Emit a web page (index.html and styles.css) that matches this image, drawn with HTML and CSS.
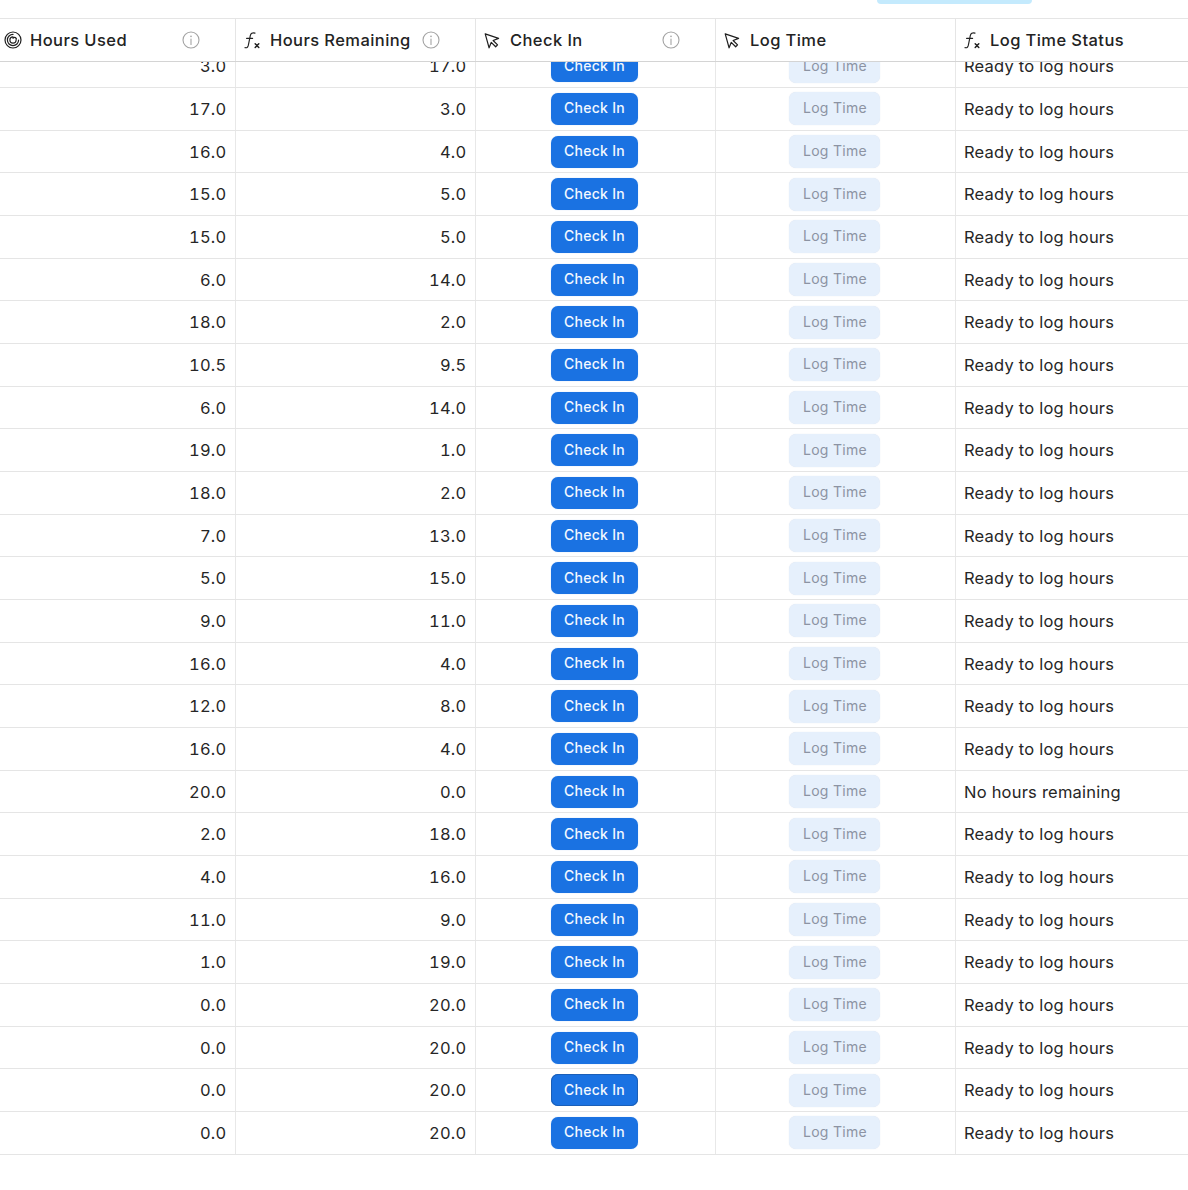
FILE: index.html
```html
<!DOCTYPE html>
<html lang="en">
<head>
<meta charset="utf-8">
<title>Hours table</title>
<link rel="stylesheet" href="styles.css">
</head>
<body>
<svg class="defs" width="0" height="0" aria-hidden="true">
  <symbol id="i-info" viewBox="0 0 18 18"><circle cx="9" cy="9" r="8" fill="none" stroke="#a3a3a3" stroke-width="1.1"/><circle cx="9" cy="5.4" r="0.8" fill="#a3a3a3"/><path d="M9 8v5.4" fill="none" stroke="#a3a3a3" stroke-width="1.1" stroke-linecap="round"/></symbol>
  <symbol id="i-fx" viewBox="0 0 16 17"><path d="M1 15.600c1.800.5 2.800-.2 3.300-2.200l2-9.700C6.800 1.400 8.200.4 11 1.100M2.600 6.400h6" fill="none" stroke="#222" stroke-width="1.150" stroke-linecap="round"/><path d="M11.200 11.800l3.600 3.700M14.800 11.800l-3.600 3.700" fill="none" stroke="#222" stroke-width="1.500" stroke-linecap="round"/></symbol>
  <symbol id="i-cursor" viewBox="0 0 17 17"><path d="M1.300 1.400l14.200 4.800-5.800 2.300 4.700 4.700-2 2-4.700-4.700-2.300 5.800z" fill="none" stroke="#1f1f1f" stroke-width="1.300" stroke-linejoin="round"/></symbol>
  <symbol id="i-rollup" viewBox="0 0 18 18"><circle cx="9" cy="9" r="8" fill="none" stroke="#1f1f1f" stroke-width="1.200"/><path d="M9 3.400a5.600 5.600 0 1 0 5.600 5.600M9 5.900a3.100 3.100 0 1 0 3.100 3.100A1.700 1.700 0 0 0 9 7.300" fill="none" stroke="#1f1f1f" stroke-width="1.200" stroke-linecap="round"/></symbol>
</svg>
<div class="topbar"><span class="topbar-tab"></span></div>
<main class="table">
  <header class="row head">
    <div class="hcell"><svg class="ic ic-roll"><use href="#i-rollup"/></svg><span class="hlabel">Hours Used</span><svg class="info"><use href="#i-info"/></svg></div>
    <div class="hcell"><svg class="ic"><use href="#i-fx"/></svg><span class="hlabel">Hours Remaining</span><svg class="info"><use href="#i-info"/></svg></div>
    <div class="hcell"><svg class="ic"><use href="#i-cursor"/></svg><span class="hlabel">Check In</span><svg class="info"><use href="#i-info"/></svg></div>
    <div class="hcell"><svg class="ic"><use href="#i-cursor"/></svg><span class="hlabel">Log Time</span></div>
    <div class="hcell"><svg class="ic"><use href="#i-fx"/></svg><span class="hlabel">Log Time Status</span></div>
  </header>
  <div class="viewport">
    <div class="rows" id="rows"></div>
  </div>
</main>
<script src="app.js"></script>
</body>
</html>
```
FILE: styles.css
```css
* { box-sizing: border-box; }
html, body { margin: 0; background: #fff; }
body {
  width: 1188px;
  height: 1190px;
  overflow: hidden;
  font-family: Inter, "Liberation Sans", sans-serif;
  color: #1f1f1f;
  font-size: 16.5px;
}
.defs { display: block; height: 0; }
.topbar { height: 18px; padding-left: 877px; }
.topbar-tab {
  display: block;
  width: 155px;
  height: 4px;
  background: #c4eafd;
  border-radius: 0 0 4px 4px;
}
.table { width: 1188px; }
.row {
  display: grid;
  grid-template-columns: 236px 240px 240px 240px 232px;
}
.head {
  height: 44px;
  border-top: 1px solid #e5e5e5;
  border-bottom: 1px solid #d4d4d4;
}
.hcell {
  display: flex;
  align-items: center;
  padding-right: 35px;
  padding-left: 8px;
  border-right: 1px solid #e5e5e5;
  position: relative;
}
.hcell:last-child { border-right: 0; }
.hcell:first-child { padding-left: 4px; }
.ic { width: 16px; height: 17px; flex: none; margin-right: 10px; }
.ic-roll { width: 18px; height: 18px; margin-right: 8px; }
.hlabel { font-weight: 500; letter-spacing: 0.42px; white-space: nowrap; color: #232323; }
.info { width: 18px; height: 18px; margin-left: auto; flex: none; }
.viewport { height: 1093.67px; overflow: hidden; }
.rows { margin-top: -16.67px; }
.drow {
  height: 42.672px;
  border-bottom: 1px solid #e5e5e5;
}
.cell {
  display: flex;
  align-items: center;
  border-right: 1px solid #e8e8e8;
  white-space: nowrap;
  letter-spacing: 0.22px;
  color: #262626;
}
.cell:last-child { border-right: 0; }
.num { justify-content: flex-end; padding: 0.25px 8.6px 0 0; font-feature-settings: "tnum" 1; }
.act { justify-content: center; padding-right: 2px; }
.status { padding: 0.25px 0 0 8px; }
.btn {
  display: flex;
  align-items: center;
  justify-content: center;
  height: 32px;
  border-radius: 7px;
  font-size: 14px;
  font-weight: 500;
  letter-spacing: 0.3px;
  padding-bottom: 2px;
}
.btn-in {
  width: 87px;
  background: #1a72e2;
  color: #f2f8ff;
  box-shadow: 0 0 1px rgba(26, 114, 226, 0.4);
}
.btn-in.focused { box-shadow: inset 0 0 0 1px #1a5fb8; }
.btn-log {
  width: 91px;
  height: 33px;
  padding-left: 1px;
  background: #e6f0fc;
  color: #8c93a3;
  font-weight: 400;
  box-shadow: 0 0 1px rgba(120, 150, 190, 0.3);
}
```
FILE: app.js
```js
var data = [
  ["3.0","17.0"],["17.0","3.0"],["16.0","4.0"],["15.0","5.0"],["15.0","5.0"],["6.0","14.0"],
  ["18.0","2.0"],["10.5","9.5"],["6.0","14.0"],["19.0","1.0"],["18.0","2.0"],["7.0","13.0"],
  ["5.0","15.0"],["9.0","11.0"],["16.0","4.0"],["12.0","8.0"],["16.0","4.0"],["20.0","0.0"],
  ["2.0","18.0"],["4.0","16.0"],["11.0","9.0"],["1.0","19.0"],["0.0","20.0"],["0.0","20.0"],
  ["0.0","20.0"],["0.0","20.0"]
];
document.getElementById("rows").innerHTML = data.map(function (d, i) {
  var status = d[1] === "0.0" ? "No hours remaining" : "Ready to log hours";
  var focus = i === 24 ? " focused" : "";
  return '<div class="row drow">' +
    '<div class="cell num">' + d[0] + '</div>' +
    '<div class="cell num">' + d[1] + '</div>' +
    '<div class="cell act"><div class="btn btn-in' + focus + '">Check In</div></div>' +
    '<div class="cell act"><div class="btn btn-log">Log Time</div></div>' +
    '<div class="cell status">' + status + '</div>' +
    '</div>';
}).join("");
```
